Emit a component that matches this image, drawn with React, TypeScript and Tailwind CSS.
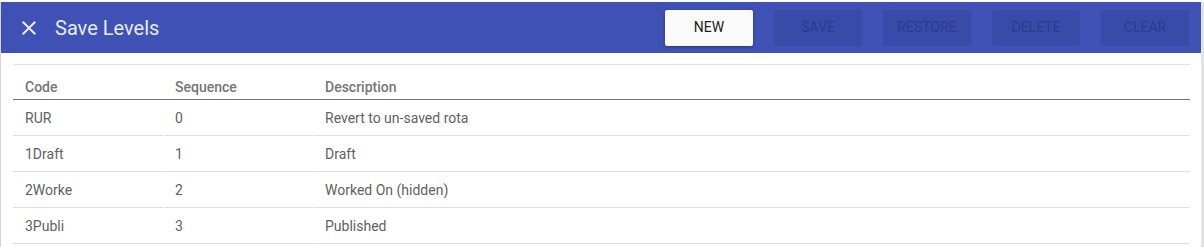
const rows = [
  { code: "RUR", seq: "0", desc: "Revert to un-saved rota" },
  { code: "1Draft", seq: "1", desc: "Draft" },
  { code: "2Worke", seq: "2", desc: "Worked On (hidden)" },
  { code: "3Publi", seq: "3", desc: "Published" },
];

const CloseIcon = () => (
  <svg viewBox="0 0 24 24" className="w-[24px] h-[24px] fill-[#e8eaf6]">
    <path d="M19 6.41L17.59 5 12 10.59 6.41 5 5 6.41 10.59 12 5 17.59 6.41 19 12 13.41 17.59 19 19 17.59 13.41 12z" />
  </svg>
);

const ToolButton = (props: { label: string; disabled?: boolean }) => {
  if (!props.disabled) {
    return (
      <button className="w-[88px] h-[36px] rounded-[2px] bg-[#fafafa] text-[#212121] text-[14px] shadow-[0_1px_3px_rgba(0,0,0,0.35)]">
        {props.label}
      </button>
    );
  }
  return (
    <button className="w-[88px] h-[36px] rounded-[2px] bg-[#394ba8] text-[#2d3b8e] text-[14px]">
      {props.label}
    </button>
  );
};

export default function App() {
  return (
    <div
      className="w-[1204px] h-[247px] bg-white pt-[2px] overflow-hidden"
      style={{ fontFamily: "Roboto, 'Liberation Sans', sans-serif" }}
    >
      <div className="h-full border-l border-l-[#d6d6d6] border-r-[3px] border-r-[#e2e2e2]">
        <div className="h-[51px] bg-[#3f51b5] flex items-center pl-[16px] pr-[12px]">
          <CloseIcon />
          <div className="ml-[14px] text-[20px] text-[#e8eaf6]">Save Levels</div>
          <div className="ml-auto flex gap-[21px]">
            <ToolButton label="NEW" />
            <ToolButton label="SAVE" disabled />
            <ToolButton label="RESTORE" disabled />
            <ToolButton label="DELETE" disabled />
            <ToolButton label="CLEAR" disabled />
          </div>
        </div>
        <div className="pt-[11px] pl-[12px] pr-[11px]">
          <div className="border-t border-[#e0e0e0]">
            <div className="flex gap-[1px] h-[35px] items-end pb-[1px] border-b-[1.5px] border-[#757575] text-[14px] font-medium text-[#757575]">
              <div className="w-[150px] pl-[12px]">Code</div>
              <div className="w-[149px] pl-[11px]">Sequence</div>
              <div className="flex-1 pl-[11px]">Description</div>
            </div>
            {rows.map((r) => (
              <div key={r.code} className="flex h-[36px] text-[14px] text-[#616161] gap-[1px]">
                <div className="w-[150px] flex items-center pl-[12px] pt-[1px] border-b border-[#dcdcdc]">{r.code}</div>
                <div className="w-[149px] flex items-center pl-[11px] pt-[1px] border-b border-[#dcdcdc]">{r.seq}</div>
                <div className="flex-1 flex items-center pl-[11px] pt-[1px] border-b border-[#dcdcdc]">{r.desc}</div>
              </div>
            ))}
          </div>
        </div>
      </div>
    </div>
  );
}
